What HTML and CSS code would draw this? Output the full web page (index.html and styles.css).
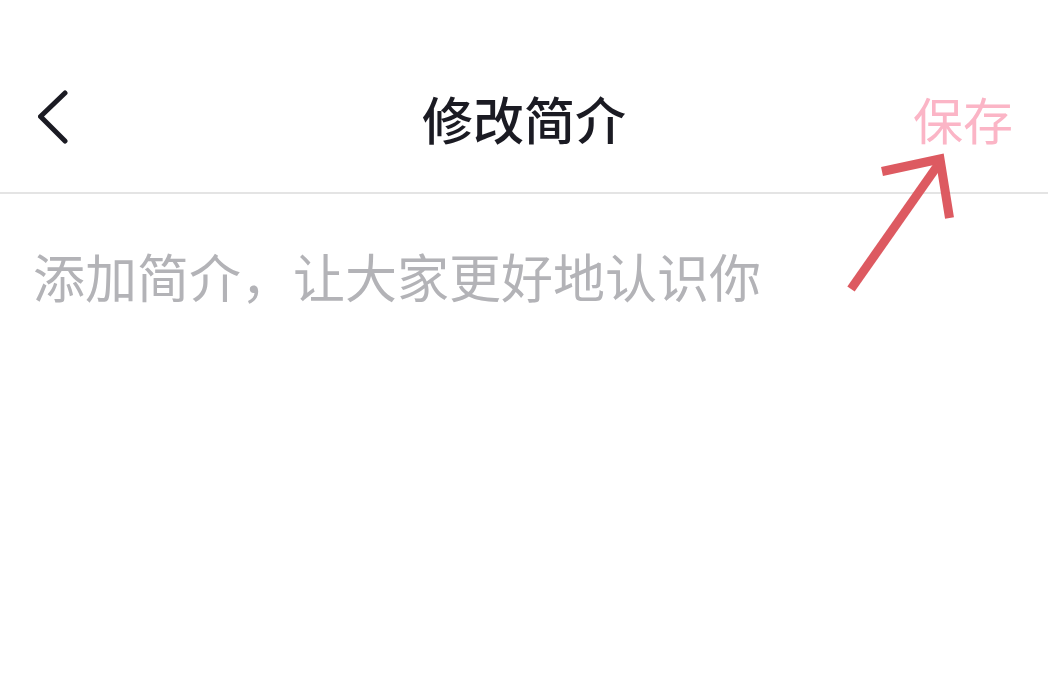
FILE: index.html
```html
<!DOCTYPE html>
<html lang="zh-CN">
<head>
<meta charset="utf-8">
<title>修改简介</title>
<link rel="stylesheet" href="styles.css">
</head>
<body>
<div class="page">
  <header class="topbar">
    <button class="back" aria-label="返回">
      <svg width="40" height="60" viewBox="0 0 40 60">
        <polyline points="27,5 2.5,28.5 27,53" fill="none" stroke="#1b1b23" stroke-width="5" stroke-linecap="round" stroke-linejoin="round"/>
      </svg>
    </button>
    <h1 class="title">修改简介</h1>
    <span class="save">保存</span>
  </header>
  <div class="editor">
    <div class="placeholder">添加简介，让大家更好地认识你</div>
  </div>
  <svg class="annot" width="1048" height="692" viewBox="0 0 1048 692">
    <line x1="851" y1="289" x2="938" y2="165" stroke="#dd5a61" stroke-width="9"/>
    <polyline points="882,171.5 940,159 949.5,218" fill="none" stroke="#dd5a61" stroke-width="9" stroke-linejoin="miter"/>
  </svg>
</div>
</body>
</html>
```
FILE: styles.css
```css
html, body {
  margin: 0;
  padding: 0;
  background: #ffffff;
}
body {
  font-family: "Noto Sans CJK SC", "Noto Sans", sans-serif;
}
.page {
  position: relative;
  width: 1048px;
  height: 692px;
  overflow: hidden;
}
.topbar {
  box-sizing: border-box;
  height: 194px;
  padding: 44px 35px 0 38px;
  border-bottom: 2px solid #e4e4e4;
  display: flex;
  align-items: center;
  justify-content: space-between;
  position: relative;
}
.back {
  border: 0;
  background: none;
  padding: 0;
  width: 40px;
  height: 60px;
  display: flex;
  align-items: center;
}
.back svg {
  display: block;
}
.title {
  position: absolute;
  left: 0;
  right: 0;
  top: 44px;
  bottom: 0;
  margin: 0;
  display: flex;
  align-items: center;
  justify-content: center;
  font-size: 51px;
  font-weight: 500;
  color: #1b1b23;
  pointer-events: none;
}
.save {
  font-size: 50px;
  color: #fbb5c6;
  line-height: 60px;
  position: relative;
  z-index: 1;
}
.editor {
  padding: 46px 34px 0 33px;
}
.placeholder {
  font-size: 52px;
  line-height: 72px;
  color: #b3b3b7;
}
.annot {
  position: absolute;
  left: 0;
  top: 0;
  pointer-events: none;
}
```
